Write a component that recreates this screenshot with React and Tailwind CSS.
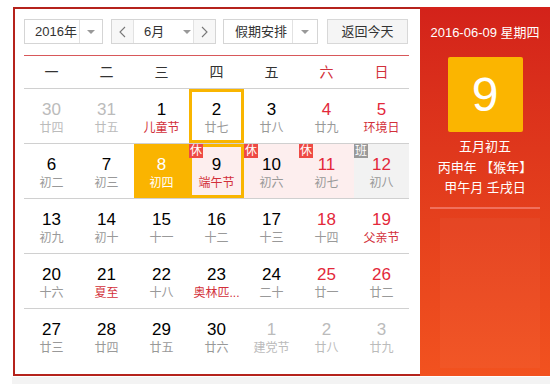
import React from "react";

const weeks = [
  [
    { n: 30, l: "廿四", out: true },
    { n: 31, l: "廿五", out: true },
    { n: 1, l: "儿童节", hol: true },
    { n: 2, l: "廿七", sel: true },
    { n: 3, l: "廿八" },
    { n: 4, l: "廿九", red: true },
    { n: 5, l: "环境日", red: true, hol: true },
  ],
  [
    { n: 6, l: "初二" },
    { n: 7, l: "初三" },
    { n: 8, l: "初四", today: true },
    { n: 9, l: "端午节", hol: true, sel: true, bg: "rest", badge: "休" },
    { n: 10, l: "初六", bg: "rest", badge: "休" },
    { n: 11, l: "初七", red: true, bg: "rest", badge: "休" },
    { n: 12, l: "初八", red: true, bg: "work", badge: "班" },
  ],
  [
    { n: 13, l: "初九" },
    { n: 14, l: "初十" },
    { n: 15, l: "十一" },
    { n: 16, l: "十二" },
    { n: 17, l: "十三" },
    { n: 18, l: "十四", red: true },
    { n: 19, l: "父亲节", red: true, hol: true },
  ],
  [
    { n: 20, l: "十六" },
    { n: 21, l: "夏至", hol: true },
    { n: 22, l: "十八" },
    { n: 23, l: "奥林匹...", hol: true },
    { n: 24, l: "二十" },
    { n: 25, l: "廿一", red: true },
    { n: 26, l: "廿二", red: true },
  ],
  [
    { n: 27, l: "廿三" },
    { n: 28, l: "廿四" },
    { n: 29, l: "廿五" },
    { n: 30, l: "廿六" },
    { n: 1, l: "建党节", out: true },
    { n: 2, l: "廿八", out: true },
    { n: 3, l: "廿九", out: true },
  ],
];

const Caret = () => (
  <span className="block w-0 h-0 border-l-[4px] border-r-[4px] border-t-[4px] border-l-transparent border-r-transparent border-t-[#999]" />
);

const Chevron = ({ dir }) => (
  <svg width="7" height="12" viewBox="0 0 7 12" fill="none">
    <polyline
      points={dir === "left" ? "6,1 1,6 6,11" : "1,1 6,6 1,11"}
      stroke="#777"
      strokeWidth="1.1"
    />
  </svg>
);

const Cell = ({ d }) => {
  let bg = "";
  if (d.today) bg = "bg-[#fab400]";
  else if (d.bg === "rest") bg = "bg-[#fdeeee]";
  else if (d.bg === "work") bg = "bg-[#f2f2f2]";

  let numColor = "text-black";
  let lunColor = "text-[#999]";
  if (d.out) {
    numColor = "text-[#bbb]";
    lunColor = "text-[#bbb]";
  } else if (d.today) {
    numColor = "text-white";
    lunColor = "text-white";
  } else {
    if (d.red) numColor = "text-[#e3283a]";
    if (d.hol) lunColor = "text-[#d2303a]";
  }

  return (
    <div className={`relative h-[54px] flex flex-col items-center pt-[11px] ${bg}`}>
      {d.sel && (
        <div className="absolute inset-0 border-[3px] border-[#f9b500]" />
      )}
      {d.badge && (
        <div
          className={`absolute top-0 left-0 w-[14px] h-[14px] text-[12px] leading-[14px] text-center text-white ${
            d.badge === "班" ? "bg-[#999]" : "bg-[#ee4a44]"
          }`}
        >
          {d.badge}
        </div>
      )}
      <div className={`relative text-[17px] leading-[20px] ${numColor}`}>{d.n}</div>
      <div className={`relative text-[12px] leading-[17px] whitespace-nowrap ${lunColor}`}>{d.l}</div>
    </div>
  );
};

const App = () => {
  const weekdays = ["一", "二", "三", "四", "五", "六", "日"];

  return (
    <div className="w-[556px] h-[384px] bg-white font-['Liberation_Sans','Noto_Sans_CJK_SC',sans-serif] overflow-hidden">
      <div className="ml-[13px] pt-[7px] flex">
        <div className="w-[407px] h-[369px] border-2 border-r-0 border-[#b5231c] pl-[9px] pt-[10px]">
          <div className="flex h-[25px] text-[13px] text-[#333]">
            <div className="flex w-[79px] border border-[#d5d5d5] bg-white">
              <div className="flex-1 flex items-center pl-[10px]">2016年</div>
              <div className="w-[23px] border-l border-[#e2e2e2] flex items-center justify-center">
                <Caret />
              </div>
            </div>
            <div className="flex w-[105px] ml-[8px] border border-[#d5d5d5] bg-white">
              <div className="w-[22px] border-r border-[#e2e2e2] bg-[#f7f7f7] flex items-center justify-center">
                <Chevron dir="left" />
              </div>
              <div className="flex-1 flex items-center pl-[10px]">
                <span>6月</span>
                <span className="ml-[19px]">
                  <Caret />
                </span>
              </div>
              <div className="w-[22px] border-l border-[#e2e2e2] bg-[#f7f7f7] flex items-center justify-center">
                <Chevron dir="right" />
              </div>
            </div>
            <div className="flex w-[95px] ml-[7px] border border-[#d5d5d5] bg-white">
              <div className="flex-1 flex items-center pl-[11px]">假期安排</div>
              <div className="w-[25px] border-l border-[#e2e2e2] flex items-center justify-center">
                <Caret />
              </div>
            </div>
            <div className="w-[81px] ml-[9px] border border-[#d8d8d8] bg-[#f5f5f5] flex items-center justify-center">
              返回今天
            </div>
          </div>

          <div className="w-[385px] mt-[11px] h-px bg-[#d8585a]" />

          <div className="w-[385px] grid grid-cols-[repeat(7,55px)] h-[33px] border-b border-[#d0d0d0] items-center text-[14px]">
            {weekdays.map((w, i) => (
              <div
                key={w}
                className={`text-center ${i >= 5 ? "text-[#d2303a]" : "text-[#333]"}`}
              >
                {w}
              </div>
            ))}
          </div>

          {weeks.map((row, ri) => (
            <div
              key={ri}
              className={`w-[385px] grid grid-cols-[repeat(7,55px)] ${
                ri < weeks.length - 1 ? "border-b border-[#d0d0d0]" : ""
              }`}
            >
              {row.map((d, ci) => (
                <Cell key={ci} d={d} />
              ))}
            </div>
          ))}
        </div>

        <div className="w-[130px] h-[369px] bg-linear-to-b from-[#d3221a] to-[#f2521f] flex flex-col items-center text-white">
          <div className="mt-[18px] text-[13px] leading-[16px] whitespace-nowrap">2016-06-09 星期四</div>
          <div className="mt-[16px] w-[75px] h-[75px] rounded-[2px] bg-[#fbb500] flex items-center justify-center text-[48px] leading-none">
            9
          </div>
          <div className="mt-[5px] text-[13px] leading-[20.5px] text-center whitespace-nowrap">
            <div>五月初五</div>
            <div>丙申年 【猴年】</div>
            <div>甲午月 壬戌日</div>
          </div>
          <div className="mt-[8px] w-[110px] h-[2px] bg-[#f0705c]" />
          <div className="mt-[9px] ml-[10px] w-[100px] h-[150px] bg-white/[0.03]" />
        </div>
      </div>
      <div className="ml-[12px] mt-px w-[538px] h-[7px] bg-[#f3f3f3]" />
    </div>
  );
};

export default App;
